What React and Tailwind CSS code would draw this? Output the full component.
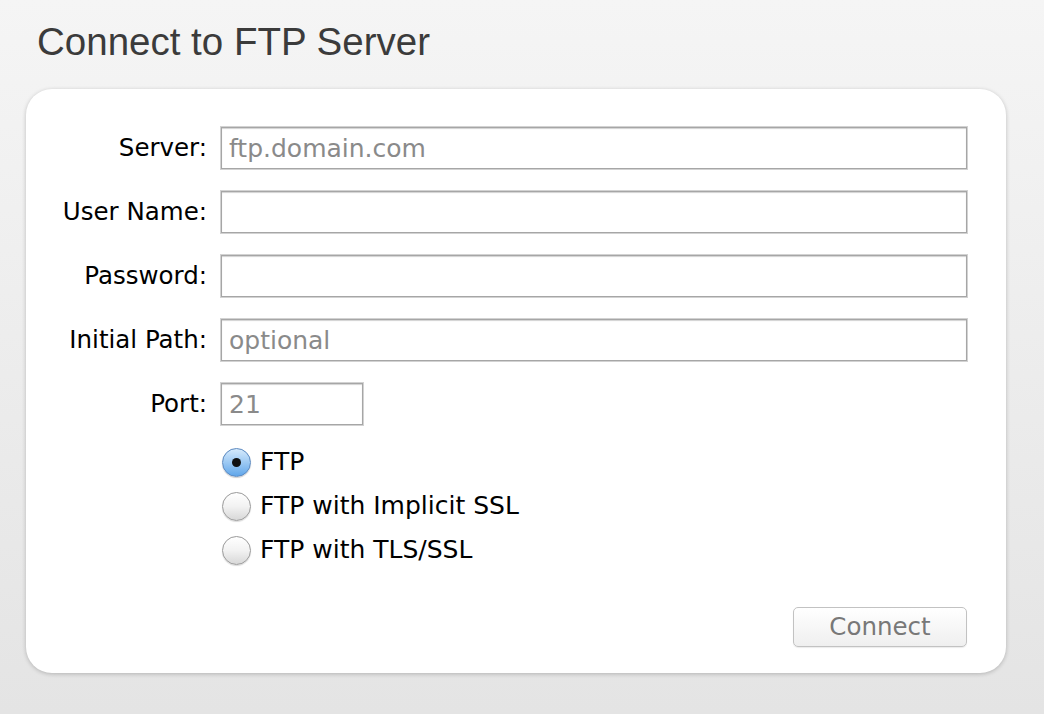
import { useState } from 'react';

const fields = [
    { label: 'Server:', placeholder: 'ftp.domain.com' },
    { label: 'User Name:', placeholder: '' },
    { label: 'Password:', placeholder: '', type: 'password' },
    { label: 'Initial Path:', placeholder: 'optional' },
];

const protocols = ['FTP', 'FTP with Implicit SSL', 'FTP with TLS/SSL'];

function Radio({ checked }) {
    if (checked) {
        return (
            <span className="flex h-[29px] w-[29px] shrink-0 items-center justify-center rounded-full border border-[#5b89c0] bg-gradient-to-b from-[#d6eafc] via-[#9cc9f3] to-[#5fa6ea] shadow-[0_1px_1px_rgba(0,0,0,0.2)]">
                <span className="h-[9px] w-[9px] rounded-full bg-[#111]" />
            </span>
        );
    }
    return (
        <span className="h-[29px] w-[29px] shrink-0 rounded-full border border-[#9a9a9a] bg-gradient-to-b from-[#ffffff] via-[#f2f2f2] to-[#d8d8d8] shadow-[0_1px_1px_rgba(0,0,0,0.15)]" />
    );
}

export default function App() {
    const [protocol, setProtocol] = useState(0);

    return (
        <div
            className="min-h-[714px] w-[1044px] bg-gradient-to-b from-[#f5f5f5] to-[#e4e4e4] pl-[26px] pr-[38px] pt-[19px]"
            style={{ fontFamily: '"DejaVu Sans", sans-serif' }}
        >
            <h1
                className="pl-[11px] text-[38.5px] font-normal leading-[46px] text-[#3b3b3b]"
                style={{ fontFamily: '"Liberation Sans", Arial, sans-serif' }}
            >
                Connect to FTP Server
            </h1>

            {/* Card */}
            <div className="mt-[24px] rounded-[26px] bg-white pb-[26px] pr-[39px] pt-[38px] shadow-[0_1px_4px_rgba(0,0,0,0.22)]">
                <div className="flex flex-col gap-[22px]">
                    {fields.map((f) => (
                        <div key={f.label} className="flex items-center gap-[14px]">
                            <label className="w-[181px] shrink-0 text-right text-[24.5px] text-black">
                                {f.label}
                            </label>
                            <input
                                type={f.type || 'text'}
                                placeholder={f.placeholder}
                                className="h-[42px] flex-1 border border-[#a6a6a6] bg-white px-[7px] text-[25px] text-black shadow-[inset_0_1px_1px_rgba(0,0,0,0.18),0_0_0_1px_#d2d2d2] outline-none placeholder:text-[#8a8a8a]"
                            />
                        </div>
                    ))}
                    <div className="flex items-center gap-[14px]">
                        <label className="w-[181px] shrink-0 text-right text-[24.5px] text-black">Port:</label>
                        <input
                            type="text"
                            placeholder="21"
                            className="h-[42px] w-[142px] border border-[#a6a6a6] bg-white px-[7px] text-[25px] text-black shadow-[inset_0_1px_1px_rgba(0,0,0,0.18),0_0_0_1px_#d2d2d2] outline-none placeholder:text-[#8a8a8a]"
                        />
                    </div>
                </div>

                {/* Protocol radios */}
                <div className="ml-[196px] mt-[15px] flex flex-col">
                    {protocols.map((p, i) => (
                        <button
                            key={p}
                            type="button"
                            onClick={() => setProtocol(i)}
                            className="flex h-[44px] items-center gap-[9px] text-left text-[25px] text-black"
                        >
                            <Radio checked={protocol === i} />
                            <span>{p}</span>
                        </button>
                    ))}
                </div>

                <div className="mt-[35px] flex justify-end">
                    <button
                        type="button"
                        className="h-[40px] w-[174px] rounded-[5px] border border-[#c2c2c2] bg-gradient-to-b from-[#ffffff] to-[#efefef] text-[24.5px] text-[#787878] shadow-[0_1px_1px_rgba(0,0,0,0.08)]"
                    >
                        Connect
                    </button>
                </div>
            </div>
        </div>
    );
}
